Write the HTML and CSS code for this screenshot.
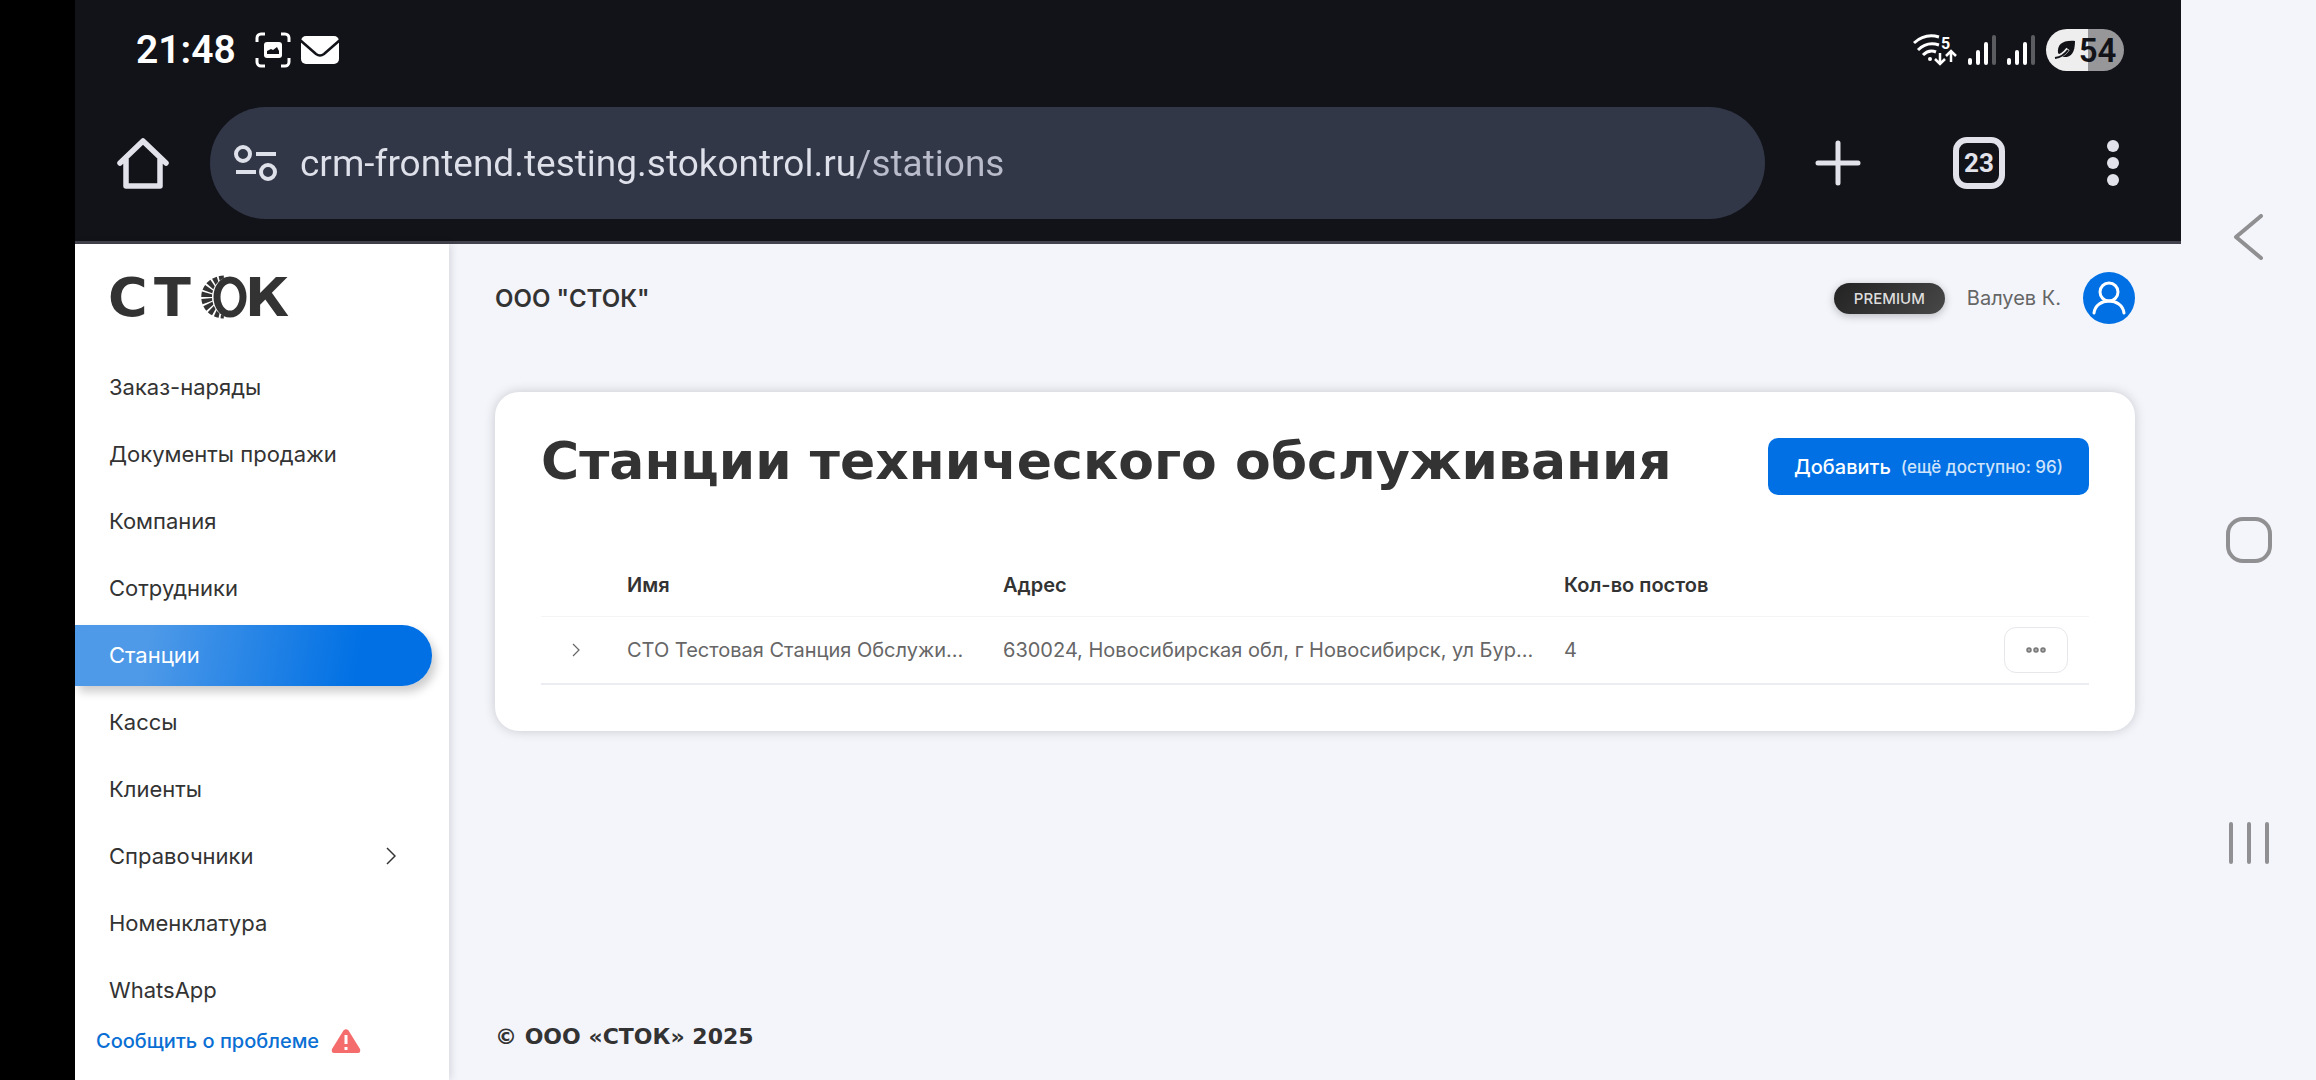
FILE: index.html
```
<!DOCTYPE html>
<html lang="ru">
<head>
  <meta charset="UTF-8" />
  <title>СТОК - Станции</title>
  <meta name="viewport" content="width=device-width, initial-scale=1.0" />
  <link rel="stylesheet" href="styles.css">
</head>
<body>

  <div class="screen">
    <!-- Browser chrome -->
    <header class="chrome">
      <div class="status-bar">
        <span class="clock">21:48</span>
        <svg class="capture-icon" width="36" height="36" viewBox="0 0 36 36" fill="none">
          <path d="M2 10V6a4 4 0 0 1 4-4h4M26 2h4a4 4 0 0 1 4 4v4M34 26v4a4 4 0 0 1-4 4h-4M10 34H6a4 4 0 0 1-4-4v-4" stroke="#fff" stroke-width="3" />
          <rect x="9" y="10" width="18" height="16" rx="3" fill="#fff" />
          <path d="M12 22v-3l4-2 2 1 4-3 2 4v3z" fill="#121318" />
        </svg>
        <svg class="mail-icon" width="40" height="30" viewBox="0 0 40 30">
          <rect x="1" y="1" width="38" height="28" rx="5" fill="#fff" />
          <path d="M0 5l16 14q4 3 8 0L40 5" fill="none" stroke="#121318" stroke-width="2.5" />
        </svg>
        <div class="status-right">
          <svg width="44" height="32" viewBox="0 0 44 32" fill="none" stroke="#fff" stroke-width="3">
            <path d="M1 9Q12-1 26 3M5 16q9-9 21-5M10 21q6-6 13-3" />
            <circle cx="17" cy="25" r="2" fill="#fff" stroke="none" />
            <path d="M27 19v10M22 25l5 5 5-5M38 28V18M33 22l5-5 5 5" stroke-width="2.5" />
            <text x="28" y="15" fill="#fff" stroke="none" class="wifi-band">5</text>
          </svg>
          <svg width="28" height="30" viewBox="0 0 28 30">
            <path d="M2 25v3M10 17v11M18 9v19" stroke="#fff" stroke-width="4" stroke-linecap="round" />
            <path d="M26 2v26" stroke="#5b5c60" stroke-width="4" stroke-linecap="round" />
          </svg>
          <svg width="28" height="30" viewBox="0 0 28 30">
            <path d="M2 25v3M10 17v11M18 9v19" stroke="#fff" stroke-width="4" stroke-linecap="round" />
            <path d="M26 2v26" stroke="#5b5c60" stroke-width="4" stroke-linecap="round" />
          </svg>
          <div class="battery">
            <svg width="22" height="20" viewBox="0 0 22 20">
              <path d="M4 13C3 5 8 0 21 1c0 12-4 17-13 16z" fill="#121318" />
              <path d="M0 18q8-1 14-9" stroke="#eee" stroke-width="4" fill="none" />
              <path d="M1 18q8-1 13-8" stroke="#121318" stroke-width="2" fill="none" />
            </svg>
            <span>54</span>
          </div>
        </div>
      </div>

      <div class="toolbar">
        <button class="chrome-btn" aria-label="Home">
          <svg width="52" height="52" viewBox="0 0 52 52" fill="none" stroke="#e2e3ea" stroke-width="5.5" stroke-linecap="round" stroke-linejoin="round">
            <path d="M3 26L26 4l23 22M9 22v27h34V22" />
          </svg>
        </button>
        <label class="url-bar">
          <svg width="44" height="36" viewBox="0 0 44 36" fill="none" stroke="#dfe1ea" stroke-width="4">
            <circle cx="9" cy="9" r="7" /><path d="M22 9h20M2 27h20" /><circle cx="34" cy="27" r="7" />
          </svg>
          <input type="text" aria-label="URL" value="crm-frontend.testing.stokontrol.ru/stations" />
        </label>
        <div class="toolbar-actions">
          <button class="chrome-btn" aria-label="New tab">
            <svg width="46" height="46" viewBox="0 0 46 46" stroke="#e2e3ea" stroke-width="5" stroke-linecap="round">
              <path d="M3 23h40M23 3v40" />
            </svg>
          </button>
          <button class="tabs-btn">23</button>
          <button class="chrome-btn" aria-label="Menu">
            <svg width="32" height="46" viewBox="0 0 32 46" fill="#e2e3ea">
              <circle cx="16" cy="6" r="6" /><circle cx="16" cy="23" r="6" /><circle cx="16" cy="40" r="6" />
            </svg>
          </button>
        </div>
      </div>
    </header>

    <div class="app">
      <!-- Sidebar -->
      <aside class="sidebar">
        <a class="logo" href="#" aria-label="СТОК">
          <svg width="186" height="66" viewBox="0 0 186 66">
            <text x="-1" y="52">С</text>
            <text x="45" y="52">Т</text>
            <g fill="none" stroke="#333">
              <path d="M115 17C92 18 92 48 115 49" stroke-width="11" stroke-dasharray="4 1.5" />
              <ellipse cx="121" cy="33" rx="18" ry="20" fill="#fff" stroke="none" />
              <ellipse cx="121" cy="33" rx="13" ry="17" stroke-width="7" />
            </g>
            <text x="136" y="52">К</text>
          </svg>
        </a>
        <nav class="menu">
          <a href="#">Заказ-наряды</a>
          <a href="#">Документы продажи</a>
          <a href="#">Компания</a>
          <a href="#">Сотрудники</a>
          <a href="#" class="active">Станции</a>
          <a href="#">Кассы</a>
          <a href="#">Клиенты</a>
          <a href="#">Справочники
            <svg width="10" height="18" viewBox="0 0 10 18" fill="none" stroke="#333" stroke-width="1.5"><path d="M1 1l8 8-8 8" /></svg>
          </a>
          <a href="#">Номенклатура</a>
          <a href="#">WhatsApp</a>
        </nav>
        <a class="report" href="#">Сообщить о проблеме
          <svg width="30" height="24" viewBox="0 0 30 24">
            <path d="M12.5 1.5q2.5-2.5 5 0L29 20q1 4-2 4H3q-3 0-2-4z" fill="#f46c6c" />
            <path d="M15 6v9M15 18v3" stroke="#fff" stroke-width="3" />
          </svg>
        </a>
      </aside>

      <!-- Page content -->
      <main class="content">
        <div class="topbar">
          <span class="company">ООО "СТОК"</span>
          <span class="premium">PREMIUM</span>
          <span class="user-name">Валуев К.</span>
          <button class="avatar" aria-label="Профиль">
            <svg width="34" height="34" viewBox="0 0 34 34" fill="none" stroke="#fff" stroke-width="3" stroke-linecap="round">
              <circle cx="17" cy="11" r="9" /><path d="M2 32c2-16 28-16 30 0" />
            </svg>
          </button>
        </div>

        <section class="card">
          <div class="card-head">
            <h1>Станции технического обслуживания</h1>
            <button class="add-btn">Добавить <small>(ещё доступно: 96)</small></button>
          </div>
          <table class="stations">
            <thead>
              <tr>
                <th class="col-expand"></th>
                <th class="col-name">Имя</th>
                <th class="col-address">Адрес</th>
                <th>Кол-во постов</th>
                <th class="col-actions"></th>
              </tr>
            </thead>
            <tbody>
              <tr>
                <td class="col-expand">
                  <button class="expand-btn" aria-label="Развернуть">
                    <svg width="8" height="14" viewBox="0 0 8 14" fill="none" stroke="#666" stroke-width="1.2"><path d="M1 1l6 6-6 6" /></svg>
                  </button>
                </td>
                <td>СТО Тестовая Станция Обслужи...</td>
                <td>630024, Новосибирская обл, г Новосибирск, ул Бур...</td>
                <td>4</td>
                <td class="col-actions">
                  <button class="more-btn" aria-label="Действия">
                    <svg width="20" height="6" viewBox="0 0 20 6" fill="#aaa" stroke="#777" stroke-width="1.5">
                      <circle cx="3" cy="3" r="2" /><circle cx="10" cy="3" r="2" /><circle cx="17" cy="3" r="2" />
                    </svg>
                  </button>
                </td>
              </tr>
            </tbody>
          </table>
        </section>

        <footer class="footer">© ООО «СТОК» 2025</footer>
      </main>
    </div>
  </div>

  <!-- System navigation -->
  <nav class="system-nav">
    <button aria-label="Back">
      <svg width="46" height="46" viewBox="0 0 46 46"><path d="M35 2L10 23l25 21" /></svg>
    </button>
    <button aria-label="Home">
      <svg width="46" height="46" viewBox="0 0 46 46"><rect x="2" y="2" width="42" height="42" rx="15" /></svg>
    </button>
    <button aria-label="Recents">
      <svg width="46" height="46" viewBox="0 0 46 46"><path d="M5 4v38M23 4v38M41 4v38" /></svg>
    </button>
  </nav>

</body>
</html>
```
FILE: styles.css
```
* {
  box-sizing: border-box;
}
body {
  margin: 0;
  min-height: 100vh;
  display: flex;
  padding-left: 75px;
  background: #000;
  color: #333;
  font-family: Inter, "Noto Sans", sans-serif;
  font-size: 20px;
}
a {
  color: inherit;
  text-decoration: none;
}
button {
  font: inherit;
  color: inherit;
  background: none;
  border: none;
  padding: 0;
}
svg {
  display: block;
  flex-shrink: 0;
}
.screen {
  flex: 1;
  min-width: 0;
  display: flex;
  flex-direction: column;
  background: #f3f5fb;
}

/* Browser chrome */
.chrome {
  background: #121318;
  border-bottom: 3px solid #42434d;
  font-family: Roboto, sans-serif;
}
.status-bar {
  display: flex;
  align-items: center;
  height: 100px;
  padding: 0 57px 0 61px;
  color: #fff;
}
.clock {
  font-size: 39px;
  font-weight: 600;
}
.capture-icon {
  margin-left: 19px;
}
.mail-icon {
  margin-left: 9px;
}
.status-right {
  display: flex;
  align-items: center;
  gap: 11px;
  margin-left: auto;
}
.wifi-band {
  font-size: 16px;
  font-weight: 700;
}
.battery {
  display: flex;
  align-items: center;
  justify-content: center;
  gap: 3px;
  width: 78px;
  height: 42px;
  border-radius: 21px;
  background: linear-gradient(90deg, #eee 54%, #979799 54%);
  color: #121318;
  font-size: 33px;
  font-weight: 600;
}
.toolbar {
  display: flex;
  align-items: center;
  padding: 7px 52px 22px 42px;
}
.url-bar {
  flex: 1;
  display: flex;
  align-items: center;
  gap: 22px;
  height: 112px;
  margin: 0 50px 0 41px;
  padding: 0 24px;
  border-radius: 56px;
  background: #323748;
}
.url-bar input {
  flex: 1;
  min-width: 0;
  padding: 0;
  border: none;
  outline: none;
  font: 37px Roboto, sans-serif;
  color: transparent;
  background: linear-gradient(90deg, #dfe1ea 556px, #b9bcca 556px);
  background-clip: text;
}
.toolbar-actions {
  display: flex;
  align-items: center;
  gap: 92px;
}
.tabs-btn {
  width: 52px;
  height: 52px;
  border: 6px solid #e2e3ea;
  border-radius: 14px;
  color: #e2e3ea;
  font-size: 26px;
  font-weight: 700;
}

/* Sidebar */
.app {
  flex: 1;
  display: flex;
}
.sidebar {
  width: 374px;
  display: flex;
  flex-direction: column;
  background: #fff;
  box-shadow: 2px 0 8px rgba(0, 0, 0, 0.12);
}
.logo {
  padding: 20px 34px 0;
}
.logo text {
  font: bold 54px "DejaVu Sans", sans-serif;
  fill: #333;
}
.menu {
  display: flex;
  flex-direction: column;
  gap: 6px;
  margin-top: 27px;
  padding-right: 17px;
}
.menu a {
  display: flex;
  align-items: center;
  justify-content: space-between;
  height: 61px;
  padding: 0 36px 2px 34px;
  font-size: 22px;
}
.menu a.active {
  color: #fff;
  border-radius: 0 30px 30px 0;
  background: linear-gradient(100deg, #4f9ae8 20%, #0070e4 79%);
  box-shadow: 4px 6px 10px rgba(0, 0, 0, 0.2);
}
.report {
  display: flex;
  align-items: center;
  gap: 12px;
  margin-top: auto;
  padding: 0 21px 27px;
  color: #0a6fd4;
  font-weight: 500;
}

/* Content */
.content {
  flex: 1;
  min-width: 0;
  display: flex;
  flex-direction: column;
  padding: 0 46px;
}
.topbar {
  display: flex;
  align-items: center;
  gap: 22px;
  padding: 28px 0;
}
.company {
  margin-right: auto;
  font-size: 24px;
  font-weight: 600;
}
.premium {
  padding: 0 20px;
  border-radius: 16px;
  background: linear-gradient(135deg, #222, #484848);
  box-shadow: 0 2px 8px rgba(0, 0, 0, 0.25);
  color: #ddd;
  font-size: 15px;
  font-weight: 500;
  line-height: 31px;
}
.user-name {
  color: #666;
}
.avatar {
  display: flex;
  align-items: center;
  justify-content: center;
  width: 52px;
  height: 52px;
  border-radius: 50%;
  background: #0070e4;
}
.card {
  margin-top: 40px;
  padding: 46px;
  border-radius: 24px;
  background: #fff;
  box-shadow: 0 0 12px rgba(0, 0, 0, 0.18);
}
.card-head {
  display: flex;
  align-items: flex-start;
  justify-content: space-between;
}
h1 {
  margin: 0;
  font: bold 52px/46px "DejaVu Sans", sans-serif;
}
.add-btn {
  display: flex;
  align-items: center;
  gap: 10px;
  height: 57px;
  padding: 0 26px;
  border-radius: 10px;
  background: #0070e4;
  color: #fff;
  font-weight: 500;
  white-space: nowrap;
}
.add-btn small {
  color: #cfe3fa;
  font-size: 17px;
}
.stations {
  width: 100%;
  margin-top: 60px;
  border-collapse: collapse;
  table-layout: fixed;
}
.stations th,
.stations td {
  padding: 0 16px;
  text-align: left;
  white-space: nowrap;
}
.stations th {
  height: 61px;
  border-bottom: 1px solid #f4f4f6;
  font-weight: 600;
}
.stations td {
  height: 68px;
  border-bottom: 2px solid #ecedf3;
  color: #666;
}
.stations .col-expand {
  width: 70px;
}
.stations .col-name {
  width: 376px;
}
.stations .col-address {
  width: 561px;
}
.stations .col-actions {
  width: 120px;
  padding-right: 21px;
}
.expand-btn {
  display: block;
  margin: 0 auto;
}
.more-btn {
  display: flex;
  align-items: center;
  justify-content: center;
  width: 64px;
  height: 46px;
  margin-left: auto;
  border: 1px solid #e6e7eb;
  border-radius: 12px;
}
.footer {
  margin-top: auto;
  padding-bottom: 31px;
  font: bold 22px/24px "DejaVu Sans", sans-serif;
}

/* System navigation */
.system-nav {
  width: 135px;
  display: flex;
  flex-direction: column;
  align-items: center;
  justify-content: center;
  gap: 257px;
  background: #f3f5fb;
}
.system-nav svg {
  fill: none;
  stroke: #909092;
  stroke-width: 4;
  stroke-linecap: round;
  stroke-linejoin: round;
}
```
